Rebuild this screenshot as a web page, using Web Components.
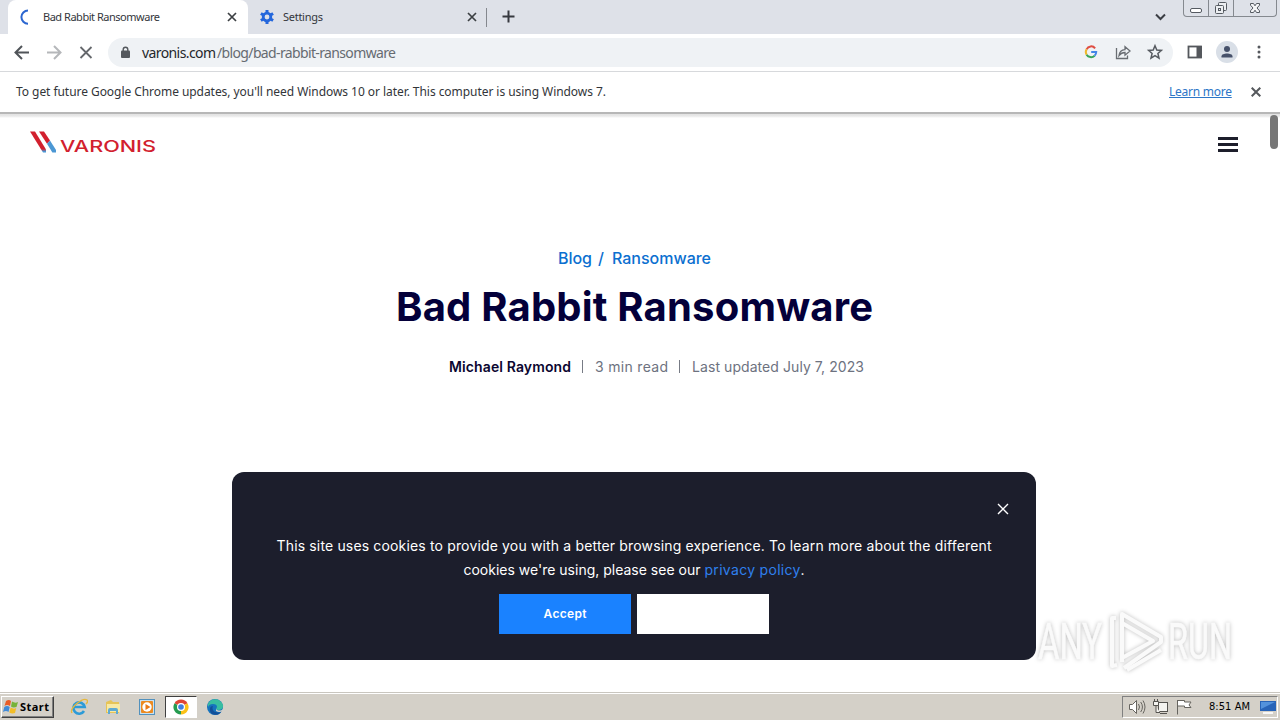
<!DOCTYPE html>
<html lang="en">
<head>
<meta charset="utf-8">
<title>Bad Rabbit Ransomware</title>
<style>
    html, body{
        margin: 0;
        height: 100%;
        overflow: hidden;
    }
    body{
        display: flex;
        flex-direction: column;
        background: #fff;
        font-family: "Noto Sans", "Open Sans", sans-serif;
    }
</style>
</head>
<body>
<tab-strip>
    <browser-tab active label="Bad Rabbit Ransomware" width="117"></browser-tab>
    <browser-tab label="Settings" width="40"></browser-tab>
</tab-strip>
<address-bar></address-bar>
<info-bar>
    <text-run width="590">To get future Google Chrome updates, you'll need Windows 10 or later. This computer is using Windows 7.</text-run>
    <text-run slot="link" width="63">Learn more</text-run>
</info-bar>
<blog-page>
    <cookie-dialog></cookie-dialog>
    <run-watermark></run-watermark>
</blog-page>
<task-bar></task-bar>

<script>
    class BaseElement extends HTMLElement{
        connectedCallback(){
            if(this.shadowRoot) return;
            this.attachShadow({mode:'open'}).innerHTML = this.render();
        }
    }

    class BrowserTab extends BaseElement{
        render(){
            const active = this.hasAttribute('active');
            const icon = active
                ? '<path d="M9 1.500A6.600 6.600 0 0 0 9 14.700" fill="none" stroke="#2b66d0" stroke-width="2"/>'
                : '<circle cx="8" cy="8" r="3.800" fill="none" stroke="#2467dc" stroke-width="2.800"/><path d="M8 1v3M8 12v3M1.900 4.500l2.500 1.500M11.600 10l2.500 1.500M1.900 11.500L4.400 10M11.600 6l2.500-1.500" stroke="#2467dc" stroke-width="3"/>';
            return `
            <style>
                :host{
                    display: flex;
                    align-items: center;
                    box-sizing: border-box;
                    width: 240px;
                    height: 34px;
                    padding: 0 11px 0 11px;
                    font-size: 11px;
                    color: #33363b;
                }
                :host([active]){
                    background: #fff;
                    border-radius: 8px 8px 0 0;
                    box-shadow: 0 8px 0 #fff;
                }
                svg{ flex: none; }
                .icon{ margin-right: 8px; }
                .close{ margin-left: auto; }
                text-run{ margin-bottom: 2px; }
            </style>
            <svg class="icon" width="16" height="16" viewBox="0 0 16 16">${icon}</svg>
            <text-run width="${this.getAttribute('width')}">${this.getAttribute('label')}</text-run>
            <svg class="close" width="10" height="10" viewBox="0 0 10 10"><path d="M1 1l8 8M9 1L1 9" stroke="#3c4043" stroke-width="1.700"/></svg>`;
        }
    }

    class TabStrip extends BaseElement{
        render(){
            return `
            <style>
                :host{
                    display: flex;
                    flex: none;
                    box-sizing: border-box;
                    height: 34px;
                    padding-left: 8px;
                    overflow: hidden;
                    background: #dee1e8;
                }
                .divider{ width: 1px; height: 19px; margin: 8px 15px 0 -2px; background: #85888e; }
                .plus{ margin-top: 10px; }
                .chevron{ margin: 13px 17px 0 auto; }
                .controls{
                    display: flex;
                    box-sizing: border-box;
                    width: 94px;
                    height: 17px;
                    margin-right: 3px;
                    border: 1px solid #85898f;
                    border-top: 0;
                    border-radius: 0 0 4px 4px;
                }
                .controls div{ display: flex; justify-content: center; width: 24px; border-right: 1px solid #85898f; }
                .controls div:last-child{ flex: 1; border: 0; }
            </style>
            <slot></slot>
            <div class="divider"></div>
            <svg class="plus" width="13" height="13" viewBox="0 0 13 13"><path d="M6.500 .5v12M.5 6.500h12" stroke="#36393f" stroke-width="2"/></svg>
            <svg class="chevron" width="11" height="8" viewBox="0 0 11 8"><path d="M1 1.500l4.500 4.500L10 1.500" fill="none" stroke="#3b3e44" stroke-width="2"/></svg>
            <div class="controls">
                <div><svg width="14" height="16"><rect x="1.500" y="8.500" width="11" height="4" rx="1.500" fill="#fff" stroke="#555a61"/></svg></div>
                <div><svg width="14" height="16"><g fill="#eceef1" stroke="#555a61"><rect x="4.500" y="2.500" width="8" height="8" rx="1"/><rect x="1.500" y="5.500" width="8" height="8" rx="1"/><rect x="4.500" y="8.500" width="2" height="2"/></g></svg></div>
                <div><svg width="14" height="16"><path d="M2.500 3.500h3L7 5.800l1.500-2.300h3v1.700L9 8l2.500 2.800v1.700h-3L7 10.200l-1.500 2.300h-3v-1.700L5 8 2.500 5.200z" fill="#f5f6f8" stroke="#555a61"/></svg></div>
            </div>`;
        }
    }

    class AddressBar extends BaseElement{
        render(){
            return `
            <style>
                :host{
                    display: flex;
                    flex: none;
                    align-items: center;
                    box-sizing: border-box;
                    height: 38px;
                    padding: 0 12px 0 13px;
                    border-bottom: 1px solid #d7d9dc;
                    background: #fff;
                }
                svg{ flex: none; }
                .nav{ display: flex; gap: 14px; width: 95px; }
                .box{
                    display: flex;
                    flex: 1;
                    align-items: center;
                    box-sizing: border-box;
                    height: 29px;
                    padding: 0 9px 0 13px;
                    border-radius: 15px;
                    background: #eff2f5;
                    font-size: 14px;
                    color: #24272b;
                }
                .lock{ margin-right: 12px; }
                .path{ color: #666b71; margin-left: 1px; }
                .actions{ display: flex; gap: 14px; margin: 0 0 1px auto; }
                .tools{ display: flex; align-items: center; gap: 12px; margin: 0 0 1px 13px; }
                .avatar{ display: flex; width: 22px; height: 22px; border-radius: 50%; background: #d9dfe7; }
            </style>
            <div class="nav">
                <svg width="18" height="18" fill="none" stroke="#505459" stroke-width="2"><path d="M16 8.500H3M9 2L2.500 8.500 9 15"/></svg>
                <svg width="18" height="18" fill="none" stroke="#b5b7ba" stroke-width="2"><path d="M2 8.500h13M9 2L15.500 8.500 9 15"/></svg>
                <svg width="18" height="18" fill="none" stroke="#65686c" stroke-width="1.800"><path d="M3.500 3l11 11M14.500 3l-11 11"/></svg>
            </div>
            <div class="box">
                <svg class="lock" width="9" height="14"><path d="M2.200 6V3.500a2.300 2.300 0 0 1 4.600 0V6" fill="none" stroke="#54585d" stroke-width="1.400"/><rect y="4.500" width="9" height="7.500" rx="1" fill="#54585d"/></svg>
                <text-run width="74">varonis.com</text-run><text-run class="path" width="179">/blog/bad-rabbit-ransomware</text-run>
                <div class="actions">
                    <svg width="18" height="18" fill="none" stroke-width="2"><path d="M13.100 5.300A5 5 0 0 0 4.600 6.300" stroke="#df4e42"/><path d="M4.600 6.300a5.200 5.200 0 0 0 0 5.400" stroke="#efb82b"/><path d="M4.600 11.700a5.200 5.200 0 0 0 8 1" stroke="#37a45a"/><path d="M12.600 12.700A5.300 5.300 0 0 0 14.200 9H9.200" stroke="#4285e8"/></svg>
                    <svg width="18" height="18" fill="none" stroke="#696d72" stroke-width="1.300"><path d="M2.500 5v10.500H13.500V12.500M5 12.500C5.500 8.500 8 6.800 11 6.700V3.700L16 8l-5 4.200V9.500C8.500 9.500 6.500 10.500 5 12.500z"/></svg>
                    <svg width="18" height="18" fill="none" stroke="#565a60" stroke-width="1.500"><path d="M9 2.700l1.800 4.300 4.600.4-3.500 3.100 1.100 4.600L9 12.600l-4 2.500 1.100-4.600-3.500-3.100 4.600-.4z"/></svg>
                </div>
            </div>
            <div class="tools">
                <svg width="18" height="18"><rect x="2.500" y="3.500" width="12.500" height="11" fill="none" stroke="#54575c" stroke-width="1.800"/><path d="M10.500 3h5.400v12h-5.400z" fill="#54575c"/></svg>
                <div class="avatar"><svg width="22" height="22" fill="#46516a"><circle cx="11" cy="8" r="3"/><path d="M5.500 16.500v-1.300c0-3.700 11-3.700 11 0v1.300z"/></svg></div>
                <svg width="18" height="18" fill="#55585d"><circle cx="9" cy="4" r="1.500"/><circle cx="9" cy="9" r="1.500"/><circle cx="9" cy="14" r="1.500"/></svg>
            </div>`;
        }
    }

    class InfoBar extends BaseElement{
        render(){
            return `
            <style>
                :host{
                    display: flex;
                    flex: none;
                    align-items: center;
                    box-sizing: border-box;
                    height: 42px;
                    padding: 0 19px 0 16px;
                    border-bottom: 2px solid #b7b7b7;
                    background: #fff;
                    font-size: 12px;
                    color: #323539;
                }
                .link{ margin-left: auto; padding-bottom: 2px; color: #2d76c7; text-decoration: underline; }
                ::slotted(text-run:not([slot])){ margin-bottom: 2px; }
                svg{ margin-left: 19px; }
            </style>
            <slot></slot>
            <div class="link"><slot name="link"></slot></div>
            <svg width="10" height="10"><path d="M.7.700l8.600 8.600M9.300.700L.7 9.300" stroke="#55585c" stroke-width="2"/></svg>`;
        }
    }

    class BlogPage extends BaseElement{
        render(){
            return `
            <style>
                :host{
                    display: block;
                    flex: 1;
                    position: relative;
                    min-height: 0;
                    background: linear-gradient(#e2e2e2, #e8e8e8 2px, #fff 4px);
                    font-family: Inter, "Open Sans", sans-serif;
                }
                header{ display: flex; justify-content: space-between; height: 130px; padding: 16px 42px 0 29px; box-sizing: border-box; }
                .menu{ display: grid; gap: 3px; width: 20px; align-content: start; margin-top: 7px; }
                .menu i{ height: 3px; background: #1d1e2b; }
                main{ display: flex; flex-direction: column; width: 1269px; align-items: center; }
                .crumbs{ display: flex; gap: 6px; height: 28px; line-height: 28px; font-size: 16px; font-weight: 500; color: #0b6fd0; }
                h1{ margin: 10px 0 0; height: 50px; line-height: 50px; font-size: 40px; font-weight: 700; color: #04003a; }
                .meta{ display: flex; margin: 22px 0 0 44px; align-items: center; height: 24px; font-size: 14px; color: #6d7280; }
                .meta b{ font-weight: 600; color: #0b0630; }
                .meta i{ width: 1px; height: 13px; margin: 0 12px 0 11px; background: #777b85; }
                .thumb{ position: absolute; right: 2px; top: 1px; width: 8px; height: 34px; border-radius: 4px; background: #777; }
            </style>
            <header>
                <svg width="130" height="26" viewBox="0 0 130 26">
                    <defs><linearGradient id="g" x1="0" y1="0" x2="0" y2="1"><stop offset=".83" stop-color="#d2202e"/><stop offset=".95" stop-color="#4b97d4"/></linearGradient></defs>
                    <path d="M1 1.500h5L17 19.500v3h-3z" fill="url(#g)"/>
                    <path d="M10 1.500h5l6 9-3 3.300z" fill="#d2202e"/><path d="M18 13.800l3-3.300L27 20v2.500h-3.600z" fill="#4b97d4"/>
                    <text x="31" y="22" font-family="Inter, sans-serif" font-size="15.500" font-weight="500" fill="#d2202e" textLength="96" lengthAdjust="spacingAndGlyphs">VARONIS</text>
                </svg>
                <div class="menu"><i></i><i></i><i></i></div>
            </header>
            <main>
                <div class="crumbs"><text-run width="34">Blog</text-run><text-run width="8">/</text-run><text-run width="99">Ransomware</text-run></div>
                <h1><text-run width="477">Bad Rabbit Ransomware</text-run></h1>
                <div class="meta"><b><text-run width="122">Michael Raymond</text-run></b><i></i><text-run width="73">3 min read</text-run><i></i><text-run width="172">Last updated July 7, 2023</text-run></div>
            </main>
            <div class="thumb"></div>
            <slot></slot>`;
        }
    }

    class CookieDialog extends BaseElement{
        render(){
            return `
            <style>
                :host{
                    position: absolute;
                    left: 232px;
                    top: 358px;
                    display: flex;
                    flex-direction: column;
                    align-items: center;
                    box-sizing: border-box;
                    width: 804px;
                    height: 188px;
                    padding: 31px 27px 0;
                    border-radius: 12px;
                    background: #1c1e2c;
                    color: #fff;
                    font-size: 14px;
                    line-height: 24px;
                }
                .close{ align-self: flex-end; flex: none; margin-bottom: 19px; }
                .line{ display: flex; }
                .policy{ margin-left: 4px; color: #2f80ee; }
                .buttons{ display: flex; gap: 6px; margin-top: 12px; }
                .buttons div{ display: flex; align-items: center; justify-content: center; width: 132px; height: 40px; background: #fff; font-size: 12px; font-weight: 600; }
                .buttons .accept{ background: #1a82ff; }
            </style>
            <svg class="close" width="12" height="12"><path d="M1 1l10 10M11 1L1 11" stroke="#fff" stroke-width="1.400"/></svg>
            <div class="line"><text-run width="715">This site uses cookies to provide you with a better browsing experience. To learn more about the different</text-run></div>
            <div class="line"><text-run width="237">cookies we're using, please see our</text-run><text-run class="policy" width="96">privacy policy</text-run><span>.</span></div>
            <div class="buttons"><div class="accept"><text-run width="43">Accept</text-run></div><div></div></div>`;
        }
    }

    class RunWatermark extends BaseElement{
        render(){
            return `
            <style>
                :host{ position: absolute; left: 1032px; top: 488px; width: 240px; height: 80px; }
                svg{ display: block; filter: drop-shadow(0 0 2px rgba(0,0,0,.26)); }
            </style>
            <svg width="240" height="80" viewBox="0 0 240 80">
                <g fill="#fafafa" stroke="#fafafa" stroke-width=".6" font-family="Roboto, sans-serif" font-size="50">
                    <text x="6" y="57" textLength="64" lengthAdjust="spacingAndGlyphs">ANY</text>
                    <text x="136" y="57" textLength="64" lengthAdjust="spacingAndGlyphs">RUN</text>
                </g>
                <g fill="none" stroke="#fafafa" stroke-width="4" stroke-linejoin="round">
                    <path d="M90 60V12l39 23v5L92 66"/>
                    <path d="M84 16h-4v48l5-1"/>
                    <path d="M90 21l31 18-31 17M95 68l34-20"/>
                </g>
            </svg>`;
        }
    }

    class TaskBar extends BaseElement{
        render(){
            return `
            <style>
                :host{
                    display: flex;
                    flex: none;
                    align-items: center;
                    box-sizing: border-box;
                    height: 28px;
                    padding: 0 2px 0 1px;
                    border-top: 1px solid #c9c6bf;
                    box-shadow: inset 0 1px #fff;
                    background: #d4d0c8;
                    font-family: "DejaVu Sans Condensed", "DejaVu Sans", sans-serif;
                    font-size: 11px;
                    color: #000;
                }
                .start{
                    display: flex;
                    align-items: center;
                    box-sizing: border-box;
                    width: 53px;
                    height: 22px;
                    padding-left: 1px;
                    border: 1px solid;
                    border-color: #fff #404040 #404040 #fff;
                    box-shadow: inset -1px -1px #808080;
                    font-family: "Noto Sans", sans-serif;
                    font-weight: bold;
                }
                .apps{ display: flex; align-items: center; margin-left: 9px; }
                .apps div{ display: flex; align-items: center; justify-content: center; box-sizing: border-box; width: 32px; height: 22px; margin-right: 2px; }
                .apps .on{ border: 1px solid; border-color: #404040 #fff #fff #404040; background: #fff; }
                .tray{
                    display: flex;
                    align-items: center;
                    box-sizing: border-box;
                    width: 156px;
                    height: 22px;
                    margin-left: auto;
                    padding-left: 5px;
                    border: 1px solid;
                    border-color: #808080 #fff #fff #808080;
                }
                .tray svg{ flex: none; margin-right: 6px; }
                .tray text-run{ margin: 0 10px 0 9px; }
            </style>
            <div class="start">
                <svg width="17" height="17"><path d="M3 3q3-2 5 0L7 8Q4 6 1.500 8z" fill="#e95c27"/><path d="M9 3.500q3 2 6 .5L13.500 9Q10 10 8 8.500z" fill="#76b33a"/><path d="M1.300 9Q4 7 6.700 9L5.500 14Q3 12 0 14z" fill="#408ad8"/><path d="M7.700 9.500q3 2 5.500.5L12 15q-3 1-5.700-.5z" fill="#f2bd28"/></svg>
                <text-run width="29">Start</text-run>
            </div>
            <div class="apps">
                <div><svg width="18" height="18" fill="none"><path d="M14 13A5.700 5.700 0 1 1 14.700 9H4.500" stroke="#2d9bd7" stroke-width="2.600"/><path d="M2 15C-1 10 13-1 17 2c1 1 0 3-1 4" stroke="#e6b83d" stroke-width="1.400"/></svg></div>
                <div><svg width="18" height="18"><path d="M2 4l5-2 2 2h6v11H2z" fill="#e6c458"/><path d="M3 6h13v8H3z" fill="#f8e9a4"/><path d="M4 16v-4q0-2 2-2h6q2 0 2 2v4h-2v-3H6v3z" fill="#5faad2"/></svg></div>
                <div><svg width="18" height="18"><rect x="1.500" y="1.500" width="15" height="15" fill="#c9e1f1" stroke="#5291bd"/><rect x="3" y="3" width="12" height="12" rx="1" fill="#ec8a20"/><circle cx="9" cy="9" r="4.700" fill="#fff"/><path d="M7.500 6l5 3-5 3z" fill="#e97917"/></svg></div>
                <div class="on"><svg width="18" height="18"><path d="M9 9L2.500 5.200A7.500 7.500 0 0 1 15.500 5.200z" fill="#df4534"/><path d="M9 9l6.500-3.800A7.500 7.500 0 0 1 9 16.500z" fill="#fbc116"/><path d="M9 9v7.500A7.500 7.500 0 0 1 2.500 5.200z" fill="#259b50"/><circle cx="9" cy="9" r="4" fill="#fff"/><circle cx="9" cy="9" r="2.800" fill="#3f7fdf"/></svg></div>
                <div><svg width="18" height="18"><circle cx="9" cy="9" r="8" fill="#1673bd"/><path d="M2 6C4 0 14-1 17 7c1 5-5 6-7 4 2-2 1-5-3-5-3 0-4 1-5 3z" fill="#38bda1"/><path d="M7 8c-2 4 2 8 8 6-3 5-12 3-11-3 0-2 1-3 3-3z" fill="#124f99"/><path d="M10 11c2 2 5 2 7 0v2q-4 2-7 0z" fill="#d4d0c8"/></svg></div>
            </div>
            <div class="tray">
                <svg width="18" height="18" fill="#fff" stroke="#66645f"><path d="M1.500 6.500h3l4-4v13l-4-4h-3z"/><path d="M10.500 6q2 3 0 6M12.700 4q3.500 5 0 10M15 2.500q4 6.500 0 13" fill="none"/></svg>
                <svg width="18" height="18" fill="#f4f3ef" stroke="#55534f"><rect x="6.500" y="4.500" width="9" height="9"/><path d="M8 15.500h7M1.500 3.500h5v4h-5zM2.500 1v2M5.500 1v2M4 8v6.500h4"/></svg>
                <svg width="18" height="18" fill="#fff" stroke="#66645f"><path d="M1.500 2v14.500M1.500 2.500h7v1.500h6.500l-2 3 2 2.500H8.500V8h-7z"/></svg>
                <text-run width="41">8:51 AM</text-run>
                <svg width="16" height="16"><path d="M0 2h16v10H0z" fill="#2864b8"/><path d="M1 3h14L1 10z" fill="#5392dc"/><path d="M3 13h10v2H3z" fill="#f7f7f7"/></svg>
            </div>`;
        }
    }

    // single line of text tracked out or in to fill its width
    class TextRun extends HTMLElement{
        connectedCallback(){
            if(this.shadowRoot) return;
            const width = Number(this.getAttribute('width'));
            this.attachShadow({mode:'open'}).innerHTML = `
            <style>
                :host{ display: block; flex: none; width: ${width}px; white-space: nowrap; }
                span{ display: inline; }
            </style>
            <span><slot></slot></span>`;
            const span = this.shadowRoot.querySelector('span');
            const count = this.textContent.length;
            if(count > 1){
                const gap = (width - span.getBoundingClientRect().width) / (count - 1);
                span.style.letterSpacing = gap + 'px';
            }
        }
    }

    customElements.define('browser-tab',BrowserTab);
    customElements.define('tab-strip',TabStrip);
    customElements.define('address-bar',AddressBar);
    customElements.define('info-bar',InfoBar);
    customElements.define('blog-page',BlogPage);
    customElements.define('cookie-dialog',CookieDialog);
    customElements.define('run-watermark',RunWatermark);
    customElements.define('task-bar',TaskBar);
    customElements.define('text-run',TextRun);
</script>
</body>
</html>
